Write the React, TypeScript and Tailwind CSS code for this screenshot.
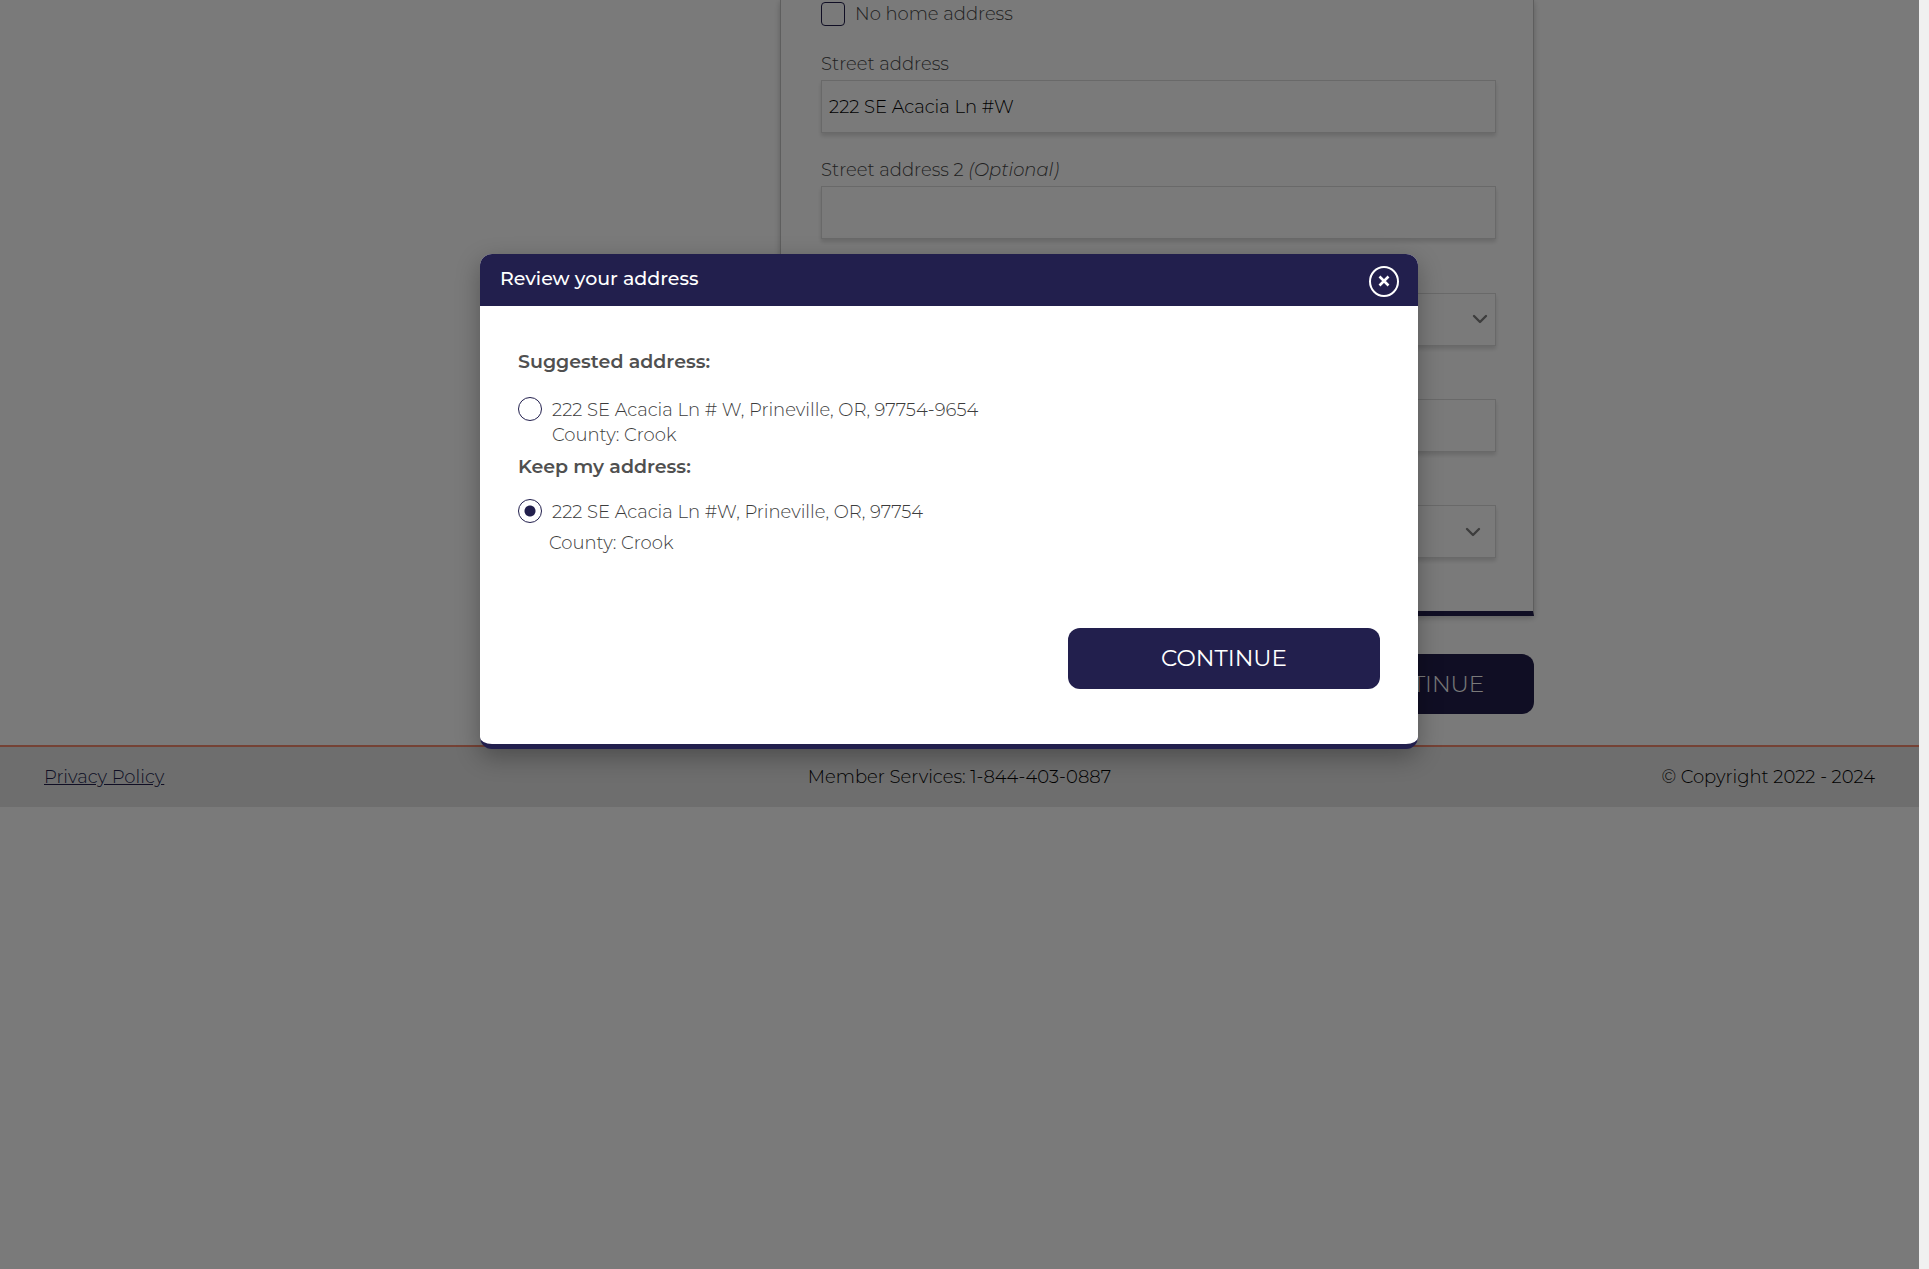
import type { ReactNode } from "react";

const FIELD =
  "block h-[53px] w-full border border-[#dcdcdc] bg-white px-[7px] text-lg font-light text-black shadow-[0_3px_4px_rgba(0,0,0,0.14)] outline-none appearance-none";
const LABEL = "block h-7 text-lg leading-6 text-[#464646]";

function Chevron({ className }: { className: string }) {
  return (
    <svg
      className={className}
      width="16"
      height="10"
      viewBox="0 0 16 10"
      fill="none"
      stroke="#808080"
      strokeWidth="2.4"
      strokeLinecap="round"
      strokeLinejoin="round"
      aria-hidden="true"
    >
      <path d="M2 2l6 6 6-6" />
    </svg>
  );
}

function SelectField({ name, chevron }: { name: string; chevron: string }) {
  return (
    <div className="relative">
      <select aria-label={name} className={FIELD} />
      <Chevron className={chevron} />
    </div>
  );
}

function AddressForm() {
  return (
    <form className="mx-auto flex w-full max-w-[1149px] flex-col items-end">
      <div className="w-full max-w-[754px] border-x border-b-[5px] border-x-[#c4c4c4] border-b-[#221f4d] bg-white pr-[37px] pb-[53px] pl-10 shadow-[0_2px_6px_rgba(0,0,0,0.22)]">
        <label className="flex h-[52px] items-start gap-2.5 pt-0.5 text-lg leading-6 text-[#464646]">
          <input
            type="checkbox"
            className="size-6 shrink-0 appearance-none rounded border border-[#221f4d] bg-white"
          />
          <span>No home address</span>
        </label>
        <label htmlFor="street" className={LABEL}>
          Street address
        </label>
        <input id="street" className={FIELD} defaultValue="222 SE Acacia Ln #W" />
        <label htmlFor="street2" className={`${LABEL} mt-[25px]`}>
          Street address 2 <em>(Optional)</em>
        </label>
        <input id="street2" className={FIELD} />
        <div className="mt-[54px] flex flex-col gap-[53px]">
          <SelectField name="City" chevron="pointer-events-none absolute top-[21px] right-2" />
          <input aria-label="ZIP code" className={FIELD} />
          <SelectField name="County" chevron="pointer-events-none absolute top-[22px] right-[15px]" />
        </div>
      </div>
      <button
        type="button"
        className="mt-[38px] mb-[31px] h-15 w-[225px] rounded-xl bg-[#221f4d] text-[23px] text-white"
      >
        CONTINUE
      </button>
    </form>
  );
}

function Footer() {
  return (
    <footer className="grid h-[62px] grid-cols-3 items-center border-t-2 border-[#f58a70] bg-[#e6e6e6] px-11 text-lg text-black">
      <a href="#privacy" className="justify-self-start text-[#221f4d] underline">
        Privacy Policy
      </a>
      <span className="justify-self-center">Member Services: 1-844-403-0887</span>
      <span className="justify-self-end">© Copyright 2022 - 2024</span>
    </footer>
  );
}

function AddressOption({ checked, children }: { checked?: boolean; children: ReactNode }) {
  return (
    <label className="flex items-start gap-2.5">
      <input
        type="radio"
        name="address"
        defaultChecked={checked}
        className="size-6 shrink-0 appearance-none rounded-full border border-[#221f4d] bg-white checked:bg-[radial-gradient(circle,#221f4d_5px,white_6px)]"
      />
      <span className="pt-px leading-[25px]">{children}</span>
    </label>
  );
}

function ReviewDialog() {
  return (
    <section
      role="dialog"
      aria-labelledby="review-title"
      className="w-full max-w-[938px] overflow-hidden rounded-xl border-b-[5px] border-[#221f4d] bg-white text-lg font-light text-[#3c3c3c] shadow-[0_8px_24px_rgba(0,0,0,0.3)]"
    >
      <header className="flex h-[52px] items-center justify-between bg-[#221f4d] pr-[19px] pl-5 text-white">
        <h1 id="review-title" className="pb-0.5 text-[19px] font-medium">
          Review your address
        </h1>
        <button type="button" aria-label="Close" className="mt-0.5">
          <svg width="30" height="31" viewBox="0 0 30 31" fill="none" stroke="white">
            <ellipse cx="15" cy="15.5" rx="14" ry="14.5" strokeWidth="2" />
            <path d="M10.5 10.5l9 9M19.5 10.5l-9 9" strokeWidth="2.6" />
          </svg>
        </button>
      </header>
      <div className="px-[38px] pt-11 pb-[55px]">
        <h2 className="text-[19px] leading-6 font-semibold text-[#505050]">Suggested address:</h2>
        <div className="mt-[23px]">
          <AddressOption>
            222 SE Acacia Ln # W, Prineville, OR, 97754-9654
            <br />
            County: Crook
          </AddressOption>
        </div>
        <h2 className="mt-[7px] text-[19px] leading-6 font-semibold text-[#505050]">Keep my address:</h2>
        <div className="mt-5">
          <AddressOption checked>222 SE Acacia Ln #W, Prineville, OR, 97754</AddressOption>
        </div>
        <p className="mt-1.5 pl-[31px] leading-6">County: Crook</p>
        <button
          type="button"
          className="mt-[73px] ml-auto block h-[61px] w-[312px] rounded-xl bg-[#221f4d] text-[23px] font-normal text-white"
        >
          CONTINUE
        </button>
      </div>
    </section>
  );
}

export default function App() {
  return (
    <div className="flex min-h-screen bg-[#f0f0f0] font-['Montserrat','Inter',sans-serif]">
      <div className="relative min-w-0 flex-1 bg-white font-light">
        <AddressForm />
        <Footer />
        <div className="absolute inset-0 flex items-start justify-center bg-black/52 pt-[254px] pr-[21px]">
          <ReviewDialog />
        </div>
      </div>
      <div className="w-2.5 shrink-0 bg-[#f0f0f0]" />
    </div>
  );
}
